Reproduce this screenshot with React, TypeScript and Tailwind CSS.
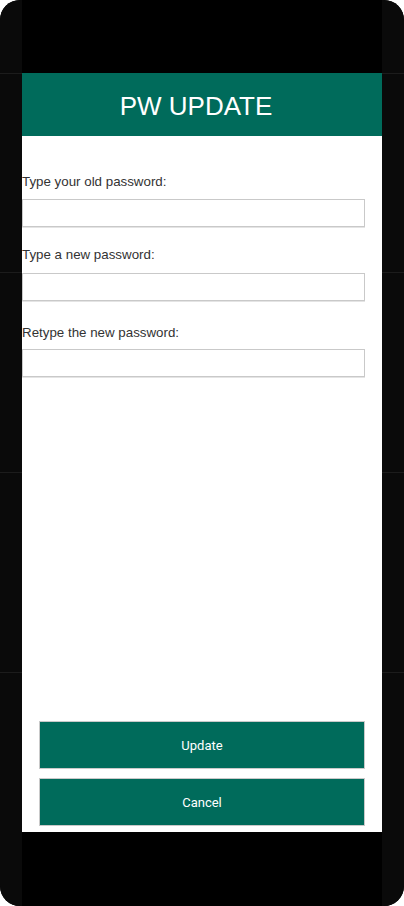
import React from "react";

function Side() {
  return (
    <div className="w-[22px] h-full bg-[#0a0a0a] flex flex-col">
      <div className="h-[73px] shrink-0" />
      <div className="h-[199px] shrink-0 border-t border-[#1c1c1c]" />
      <div className="h-[200px] shrink-0 border-t border-[#1c1c1c]" />
      <div className="h-[200px] shrink-0 border-t border-[#1c1c1c]" />
      <div className="flex-1 border-t border-[#1c1c1c]" />
    </div>
  );
}

function Field({ label, mt, mb }: { label: string; mt: string; mb: string }) {
  return (
    <div className={mt}>
      <label className={`block h-[16px] leading-[16px] text-[13.33px] text-[#333333] ${mb}`}>{label}</label>
      <input
        type="password"
        className="block w-[343px] h-[28px] bg-white border border-[#c9c9c9] shadow-[0_1px_0_#e4e4e4] outline-none"
      />
    </div>
  );
}

export default function App() {
  return (
    <div className="w-[404px] h-[906px] bg-white" style={{ fontFamily: '"Liberation Sans", Arial, sans-serif' }}>
      <div className="w-full h-full rounded-[20px] overflow-hidden flex bg-black">
        <Side />
        <div className="w-[360px] h-full flex flex-col bg-black">
          <div className="h-[73px] shrink-0" />
          <div className="h-[63px] shrink-0 bg-[#006b5b] flex items-center justify-center pr-[12px]">
            <h1 className="text-white text-[26px] leading-none pt-[2px]">PW UPDATE</h1>
          </div>
          <div className="flex-1 bg-white flex flex-col justify-between pt-[38px] pb-[6px]">
            <div>
              <Field label="Type your old password:" mt="mt-0" mb="mb-[9px]" />
              <Field label="Type a new password:" mt="mt-[20px]" mb="mb-[10px]" />
              <Field label="Retype the new password:" mt="mt-[24px]" mb="mb-[8px]" />
            </div>
            <div className="px-[17px] flex flex-col gap-[9px]" style={{ fontFamily: 'Roboto, "Liberation Sans", sans-serif' }}>
              <button className="h-[48px] w-full bg-[#006b5b] border border-[#c9c9c9] text-white text-[13px] pt-[2px]">Update</button>
              <button className="h-[48px] w-full bg-[#006b5b] border border-[#c9c9c9] text-white text-[13px] pt-[2px]">Cancel</button>
            </div>
          </div>
          <div className="h-[74px] shrink-0" />
        </div>
        <Side />
      </div>
    </div>
  );
}
